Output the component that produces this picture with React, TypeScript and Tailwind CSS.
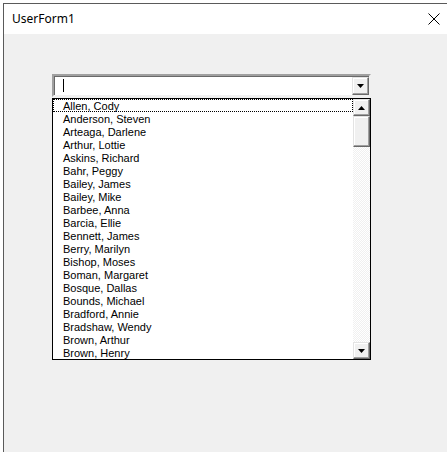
import React from "react";

const names = [
  "Allen, Cody",
  "Anderson, Steven",
  "Arteaga, Darlene",
  "Arthur, Lottie",
  "Askins, Richard",
  "Bahr, Peggy",
  "Bailey, James",
  "Bailey, Mike",
  "Barbee, Anna",
  "Barcia, Ellie",
  "Bennett, James",
  "Berry, Marilyn",
  "Bishop, Moses",
  "Boman, Margaret",
  "Bosque, Dallas",
  "Bounds, Michael",
  "Bradford, Annie",
  "Bradshaw, Wendy",
  "Brown, Arthur",
  "Brown, Henry",
];

function Arrow({ up }: { up?: boolean }) {
  return (
    <svg width="7" height="4" viewBox="0 0 7 4" aria-hidden="true">
      <path d={up ? "M3.5 0L7 4H0Z" : "M0 0H7L3.5 4Z"} fill="#000" />
    </svg>
  );
}

function ScrollButton({ up, className = "" }: { up?: boolean; className?: string }) {
  return (
    <div
      className={`flex h-[17px] w-[17px] items-center justify-center border border-t-[#e3e3e3] border-l-[#e3e3e3] border-r-[#696969] border-b-[#696969] bg-[#f0f0f0] shadow-[inset_-1px_-1px_0_#a0a0a0,inset_1px_1px_0_#fff] ${className}`}
    >
      <Arrow up={up} />
    </div>
  );
}

export default function App() {
  return (
    <div className="h-[452px] w-[447px] overflow-hidden bg-white pl-[3px] pt-[3px] font-['Liberation_Sans',Arial,sans-serif]">
      <div className="flex h-full flex-col border-l border-t border-[#5a5a5a] bg-[#f0f0f0]">
        <div className="flex h-[30px] items-center justify-between bg-white pl-[8px] pr-[6px]">
          <span className="font-['Noto_Sans',sans-serif] text-[12px] text-black">UserForm1</span>
          <svg width="12" height="12" viewBox="0 0 12 12" className="mr-[1px]" aria-hidden="true">
            <path d="M0.5 0.5L11.5 11.5M11.5 0.5L0.5 11.5" stroke="#000" strokeWidth="1" />
          </svg>
        </div>

        <div className="ml-[48px] mt-[40px] w-[319px]">
          <div className="flex h-[23px] border-2 border-t-[#a0a0a0] border-l-[#a0a0a0] border-r-[#f0f0f0] border-b-[#f0f0f0] bg-white shadow-[inset_1px_1px_0_#696969]">
            <div className="flex flex-1 items-center pl-[9px]">
              <div className="h-[13px] w-px bg-black" />
            </div>
            <ScrollButton className="mt-[1px] h-[18px]" />
          </div>

          <div className="mt-px flex h-[262px] border border-black bg-white">
            <div className="flex-1 text-[11px] leading-[13px] text-black">
              {names.map((n, i) => (
                <div
                  key={n}
                  className={`h-[13px] pl-[10px] ${i === 0 ? "outline-1 outline-dotted -outline-offset-1 outline-black" : ""}`}
                >
                  <span className="relative top-px">{n}</span>
                </div>
              ))}
            </div>
            <div className="flex w-[17px] flex-col bg-[repeating-conic-gradient(#f0f0f0_0_25%,#ffffff_0_50%)] bg-[length:2px_2px]">
              <ScrollButton up />
              <div className="h-[31px] w-[17px] border border-t-[#e3e3e3] border-l-[#e3e3e3] border-r-[#696969] border-b-[#696969] bg-[#f0f0f0] shadow-[inset_-1px_-1px_0_#a0a0a0,inset_1px_1px_0_#fff]" />
              <div className="flex-1" />
              <ScrollButton />
            </div>
          </div>
        </div>
      </div>
    </div>
  );
}
